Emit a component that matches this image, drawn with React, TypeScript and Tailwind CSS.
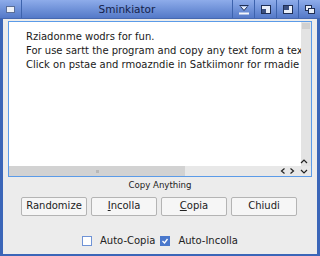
import { useState } from "react";

function TitleButton({ kind }: { kind: string }) {
  return (
    <div className="w-[22px] h-[18px] flex items-center justify-center border-l border-[#3d63ad]">
      <svg width="12" height="11" viewBox="0 0 12 11">
        {kind === "min" && (
          <g fill="none" stroke="#1f2f55" strokeWidth="1">
            <path d="M1.5 1.5h9" />
            <path d="M2.5 2.5l3.5 4 3.5-4" fill="#e8eef8" />
            <path d="M1 9.5h10" strokeWidth="2" stroke="#f4f6fb" />
          </g>
        )}
        {kind === "max" && (
          <g>
            <rect x="1.5" y="1.5" width="9" height="8" fill="#e8eef8" stroke="#1f2f55" />
            <rect x="2" y="5" width="4" height="4" fill="#3a4f80" />
          </g>
        )}
        {kind === "full" && (
          <g>
            <rect x="1.5" y="1.5" width="9" height="8" fill="#e8eef8" stroke="#1f2f55" />
            <rect x="2" y="2" width="5" height="4" fill="#3a4f80" />
          </g>
        )}
        {kind === "close" && (
          <g fill="#e8eef8" stroke="#1f2f55">
            <rect x="1.5" y="1.5" width="6" height="5" />
            <rect x="4.5" y="4.5" width="6" height="5" />
          </g>
        )}
      </svg>
    </div>
  );
}

export default function App() {
  const [autoCopia, setAutoCopia] = useState(false);
  const [autoIncolla, setAutoIncolla] = useState(true);

  return (
    <div
      className="w-[320px] h-[256px] flex flex-col bg-[#3b66b8] overflow-hidden"
      style={{ fontFamily: '"DejaVu Sans", "Noto Sans", sans-serif' }}
    >
      {/* TITLE BAR */}
      <div className="h-[19px] flex items-center bg-gradient-to-b from-[#8eacea] to-[#5479c8] border-b border-[#4668b0]">
        <div className="w-[22px] h-full flex items-center justify-center border-r border-[#3d63ad]">
          <div className="w-[9px] h-[7px] bg-[#eef1f7] border border-[#5a6e98]" />
        </div>
        <div className="flex-1 text-center text-[10.5px] leading-none text-[#14224a]">Sminkiator</div>
        <TitleButton kind="min" />
        <TitleButton kind="max" />
        <TitleButton kind="full" />
        <TitleButton kind="close" />
      </div>

      {/* BODY */}
      <div className="flex-1 mx-[3px] mb-[2px] bg-[#ececec] flex flex-col px-[5px] pt-[2px]">
        <div className="relative h-[156px] border border-[#5b9be8] bg-white flex flex-col">
          <div className="flex-1 flex min-h-0">
            <div className="flex-1 pl-[17px] pt-[8px] text-[10px] leading-[14px] text-[#1a1a1a] whitespace-nowrap overflow-hidden">
              <div>Rziadonme wodrs for fun.</div>
              <div>For use sartt the program and copy any text form a text</div>
              <div>Click on pstae and rmoazndie in Satkiimonr for rmadie</div>
            </div>
            <div className="w-[10px] bg-[#e3e3e3] flex flex-col">
              <div className="h-[6px] mx-[1px] mt-[1px] bg-[#d0d0d0]" />
              <div className="flex-1" />
            </div>
          </div>
          <div className="h-[10px] flex bg-[#e8e8e8]">
            <div className="w-[176px] bg-[#d2d2d2] flex items-center justify-center">
              <div className="w-[3px] h-[3px] bg-[#b8b8b8]" />
            </div>
            <div className="flex-1" />
          </div>
          {/* scroll arrows */}
          <svg className="absolute right-[1px] bottom-[1px]" width="30" height="16" viewBox="0 0 30 16">
            <g fill="none" stroke="#222" strokeWidth="1.2">
              <path d="M4.5 9.5l-3 2.5 3 2.5" />
              <path d="M10.5 9.5l3 2.5-3 2.5" />
              <path d="M21 4l3-3 3 3" />
              <path d="M21 11l3 3 3-3" />
            </g>
          </svg>
        </div>

        <div className="text-center text-[8.6px] leading-none text-[#222] mt-[4px]">Copy Anything</div>

        <div className="flex gap-[4px] px-[13px] mt-[7px]">
          {[
            { u: "", rest: "Randomize" },
            { u: "I", rest: "ncolla" },
            { u: "C", rest: "opia" },
            { u: "", rest: "Chiudi" },
          ].map((b, i) => (
            <button
              key={i}
              className="w-[66px] h-[19px] bg-[#f6f6f6] border border-[#b4b4b4] rounded-[2px] text-[10px] leading-none text-[#222] flex items-center justify-center"
            >
              {b.u && <span className="underline">{b.u}</span>}
              {b.rest}
            </button>
          ))}
        </div>

        <div className="flex items-center justify-center mt-[20px] text-[10px] leading-none text-[#222]">
          <button
            onClick={() => setAutoCopia(!autoCopia)}
            className="w-[10px] h-[10px] border border-[#6f93d6] bg-white"
          />
          <span className="ml-[8px]">Auto-Copia</span>
          <button
            onClick={() => setAutoIncolla(!autoIncolla)}
            className="ml-[5px] w-[10px] h-[10px] border border-[#4a78cc] bg-[#4a78cc] flex items-center justify-center"
          >
            {autoIncolla && (
              <svg width="8" height="8" viewBox="0 0 8 8">
                <path d="M1.5 4l2 2 3-4" fill="none" stroke="#fff" strokeWidth="1.3" />
              </svg>
            )}
          </button>
          <span className="ml-[8px]">Auto-Incolla</span>
        </div>
      </div>
    </div>
  );
}
